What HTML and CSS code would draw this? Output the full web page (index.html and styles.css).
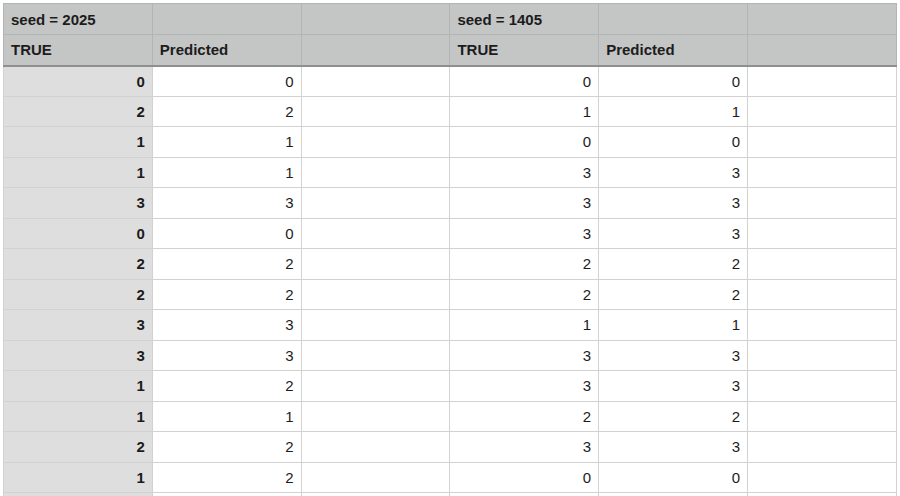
FILE: index.html
```html
<!DOCTYPE html>
<html>
<head>
<meta charset="utf-8">
<link rel="stylesheet" href="styles.css">
</head>
<body>
<div class="sheet">
<table class="grid">
<colgroup>
<col class="c"><col class="c"><col class="c"><col class="c"><col class="c"><col class="c">
</colgroup>
<thead>
<tr class="hrow"><th class="lbl">seed = 2025</th><th></th><th></th><th class="lbl">seed = 1405</th><th></th><th></th></tr>
<tr class="hrow hlast"><th class="lbl">TRUE</th><th class="lbl">Predicted</th><th></th><th class="lbl">TRUE</th><th class="lbl">Predicted</th><th></th></tr>
</thead>
<tbody>
<tr><th class="rh">0</th><td>0</td><td></td><td>0</td><td>0</td><td></td></tr>
<tr><th class="rh">2</th><td>2</td><td></td><td>1</td><td>1</td><td></td></tr>
<tr><th class="rh">1</th><td>1</td><td></td><td>0</td><td>0</td><td></td></tr>
<tr><th class="rh">1</th><td>1</td><td></td><td>3</td><td>3</td><td></td></tr>
<tr><th class="rh">3</th><td>3</td><td></td><td>3</td><td>3</td><td></td></tr>
<tr><th class="rh">0</th><td>0</td><td></td><td>3</td><td>3</td><td></td></tr>
<tr><th class="rh">2</th><td>2</td><td></td><td>2</td><td>2</td><td></td></tr>
<tr><th class="rh">2</th><td>2</td><td></td><td>2</td><td>2</td><td></td></tr>
<tr><th class="rh">3</th><td>3</td><td></td><td>1</td><td>1</td><td></td></tr>
<tr><th class="rh">3</th><td>3</td><td></td><td>3</td><td>3</td><td></td></tr>
<tr><th class="rh">1</th><td>2</td><td></td><td>3</td><td>3</td><td></td></tr>
<tr><th class="rh">1</th><td>1</td><td></td><td>2</td><td>2</td><td></td></tr>
<tr><th class="rh">2</th><td>2</td><td></td><td>3</td><td>3</td><td></td></tr>
<tr><th class="rh">1</th><td>2</td><td></td><td>0</td><td>0</td><td></td></tr>
<tr><th class="rh"></th><td></td><td></td><td></td><td></td><td></td></tr>
</tbody>
</table>
</div>
</body>
</html>
```

FILE: styles.css
```css
html, body {
  margin: 0;
  padding: 0;
  background: #ffffff;
  overflow: hidden;
}
.sheet {
  padding: 3px 0 0 3px;
  height: 493px;
  overflow: hidden;
}
.grid {
  border-collapse: collapse;
  table-layout: fixed;
  width: 893px;
  font-family: "Liberation Sans", Arial, sans-serif;
  font-size: 15px;
  color: #1c1c1c;
}
.c { width: 148.8px; }
.grid th, .grid td {
  box-sizing: border-box;
  border: 1px solid #d2d2d2;
  padding: 0 7px;
  white-space: nowrap;
  overflow: hidden;
}
.hrow th {
  height: 31px;
  background: #c4c5c5;
  border-color: #b3b4b4;
  text-align: left;
  font-weight: bold;
}
.hlast th {
  border-bottom: 2px solid #8e8f8f;
}
tbody tr { height: 30.5px; }
tbody td {
  text-align: right;
  font-weight: normal;
  background: #ffffff;
}
.rh {
  background: #dedede;
  text-align: right;
  font-weight: bold;
  border-right: 1px solid #9c9c9c;
}
```
